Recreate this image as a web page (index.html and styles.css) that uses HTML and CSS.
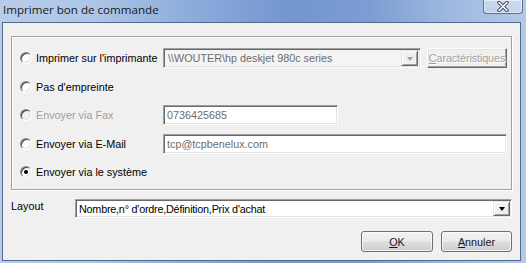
FILE: index.html
```html
<!DOCTYPE html>
<html lang="fr">
<head>
<meta charset="utf-8">
<title>Imprimer bon de commande</title>
<link rel="stylesheet" href="styles.css">
</head>
<body>
<div class="window">
  <div class="titlebar">
    <span class="title">Imprimer bon de commande</span>
    <div class="close">
      <svg width="14" height="11" viewBox="0 0 14 11">
        <path d="M3 1.5 L11 9.5 M11 1.5 L3 9.5" stroke="#3b4a60" stroke-width="3.4" stroke-linecap="round" fill="none"/>
        <path d="M3 1.5 L11 9.5 M11 1.5 L3 9.5" stroke="#ffffff" stroke-width="1.6" stroke-linecap="round" fill="none"/>
      </svg>
    </div>
  </div>
  <div class="client">
    <div class="group">
      <div class="row">
        <span class="radio"></span>
        <span class="label">Imprimer sur l'imprimante</span>
        <div class="combo disabled printer">
          <span class="combo-text">\\WOUTER\hp deskjet 980c series</span>
          <span class="drop drop-disabled"><span class="tri tri-gray"></span></span>
        </div>
        <div class="btn-classic"><u>C</u>aractéristiques</div>
      </div>
      <div class="row">
        <span class="radio"></span>
        <span class="label">Pas d'empreinte</span>
      </div>
      <div class="row">
        <span class="radio radio-disabled"></span>
        <span class="label label-disabled">Envoyer via Fax</span>
        <div class="textbox fax">0736425685</div>
      </div>
      <div class="row">
        <span class="radio"></span>
        <span class="label">Envoyer via E-Mail</span>
        <div class="textbox email">tcp@tcpbenelux.com</div>
      </div>
      <div class="row">
        <span class="radio checked"></span>
        <span class="label">Envoyer via le système</span>
      </div>
    </div>
    <div class="layout-row">
      <span class="layout-label">Layout</span>
      <div class="combo layout-combo">
        <span class="combo-text dark tight">Nombre,n° d'ordre,Définition,Prix d'achat</span>
        <span class="drop"><span class="tri"></span></span>
      </div>
    </div>
    <div class="actions">
      <div class="btn"><u>O</u>K</div>
      <div class="btn"><u>A</u>nnuler</div>
    </div>
  </div>
</div>
</body>
</html>
```
FILE: styles.css
```css
* { box-sizing: border-box; }
html, body { margin: 0; padding: 0; }
body {
  width: 526px;
  height: 263px;
  overflow: hidden;
  font-family: "Liberation Sans", Arial, sans-serif;
  font-size: 10.8px;
  color: #000;
}
.window {
  width: 526px;
  height: 263px;
  display: flex;
  flex-direction: column;
  padding: 0 5px 2px 2px;
  background: linear-gradient(to right, #b8cdea 0%, #adc5e7 18%, #8eaedc 35%, #7396cf 55%, #7c9dd3 70%, #9db8e1 85%, #b3c9e8 100%);
}
.titlebar {
  height: 22px;
  display: flex;
  justify-content: space-between;
  align-items: flex-start;
  flex: none;
}
.title {
  font-family: "Open Sans", "Noto Sans", sans-serif;
  font-size: 11.6px;
  color: #1a1a1a;
  padding: 2px 0 0 1px;
  line-height: 16px;
}
.close {
  width: 40px;
  height: 14px;
  margin-right: -2px;
  border: 1px solid #5d6f8c;
  border-top: none;
  border-radius: 0 0 4px 4px;
  background: linear-gradient(to bottom, rgba(255,255,255,0.35), rgba(220,230,245,0.45));
  box-shadow: inset 0 0 0 1px rgba(255,255,255,0.5);
  display: flex;
  justify-content: center;
  align-items: center;
}
.client {
  flex: 1;
  background: #f0f0f0;
  border: 1px solid #55698a;
  padding: 13px 8px 0 8px;
  display: flex;
  flex-direction: column;
}
.group {
  height: 154px;
  border: 1px solid #a0a0a0;
  box-shadow: inset 1px 1px 0 #fff, 1px 1px 0 #fff;
  padding: 7px 4px 0 8px;
}
.row {
  height: 28.5px;
  display: flex;
  align-items: center;
}
.radio {
  width: 12px;
  height: 12px;
  border-radius: 50%;
  border: 1px solid;
  border-color: #8a8a8a #ffffff #ffffff #8a8a8a;
  background: #fff;
  box-shadow: inset 1px 1px 0 #404040, inset -1px -1px 0 #e0e0e0;
  margin-right: 4px;
  position: relative;
  flex: none;
}
.radio-disabled { background: #f0f0f0; }
.radio.checked::after {
  content: "";
  position: absolute;
  left: 3px;
  top: 3px;
  width: 4px;
  height: 4px;
  border-radius: 50%;
  background: #000;
}
.label {
  width: 127px;
  flex: none;
  white-space: nowrap;
}
.label-disabled { color: #a0a0a0; }
.combo {
  height: 20px;
  display: flex;
  align-items: center;
  justify-content: space-between;
  border: 1px solid;
  border-color: #a0a0a0 #ffffff #ffffff #a0a0a0;
  box-shadow: inset 1px 1px 0 #696969, inset -1px -1px 0 #e3e3e3;
  background: #fff;
  padding: 0 2px 0 3px;
}
.combo.disabled { background: #f4f4f4; }
.printer { width: 258px; }
.combo-text {
  color: #6d6d6d;
  white-space: nowrap;
  padding-left: 1px;
}
.combo-text.dark { color: #000; }
.combo-text.tight { letter-spacing: -0.22px; }
.drop {
  width: 17px;
  height: 16px;
  background: #f0f0f0;
  border: 1px solid;
  border-color: #e3e3e3 #696969 #696969 #e3e3e3;
  box-shadow: inset 1px 1px 0 #fff, inset -1px -1px 0 #a0a0a0;
  display: flex;
  align-items: center;
  justify-content: center;
}
.tri {
  width: 0;
  height: 0;
  border-left: 3.5px solid transparent;
  border-right: 3.5px solid transparent;
  border-top: 4px solid #000;
  margin-top: 1px;
}
.tri-gray { border-top-color: #a0a0a0; }
.btn-classic {
  width: 80px;
  height: 20px;
  margin-left: 6px;
  border: 1px solid;
  border-color: #ffffff #696969 #696969 #ffffff;
  box-shadow: inset -1px -1px 0 #a0a0a0, inset 1px 1px 0 #e3e3e3;
  background: #f0f0f0;
  color: #a0a0a0;
  text-shadow: 1px 1px 0 #fff;
  display: flex;
  align-items: center;
  justify-content: center;
  white-space: nowrap;
  letter-spacing: -0.1px;
}
.textbox {
  height: 20px;
  display: flex;
  align-items: center;
  border: 1px solid;
  border-color: #a0a0a0 #ffffff #ffffff #a0a0a0;
  box-shadow: inset 1px 1px 0 #696969, inset -1px -1px 0 #e3e3e3;
  background: #fff;
  color: #6d6d6d;
  padding-left: 3px;
  white-space: nowrap;
}
.fax { width: 175px; }
.email { width: 347px; }
.layout-row {
  margin-top: 9px;
  display: flex;
  align-items: center;
}
.layout-label {
  width: 64px;
  flex: none;
  margin-top: -3px;
  align-self: flex-start;
  padding-top: 4px;
}
.layout-combo {
  flex: 1;
  height: 19px;
  padding: 0 1px 0 2px;
}
.layout-combo .drop { height: 15px; }
.actions {
  margin-top: 13px;
  display: flex;
  justify-content: flex-end;
  gap: 8px;
}
.btn {
  width: 72px;
  height: 21px;
  border: 1px solid #707070;
  border-radius: 3px;
  background: linear-gradient(to bottom, #f2f2f2 0%, #ebebeb 48%, #dddddd 52%, #cfcfcf 100%);
  box-shadow: inset 0 0 0 1px rgba(255,255,255,0.7);
  display: flex;
  align-items: center;
  justify-content: center;
  color: #1a1a1a;
}
.btn + .btn { width: 71px; }
```
